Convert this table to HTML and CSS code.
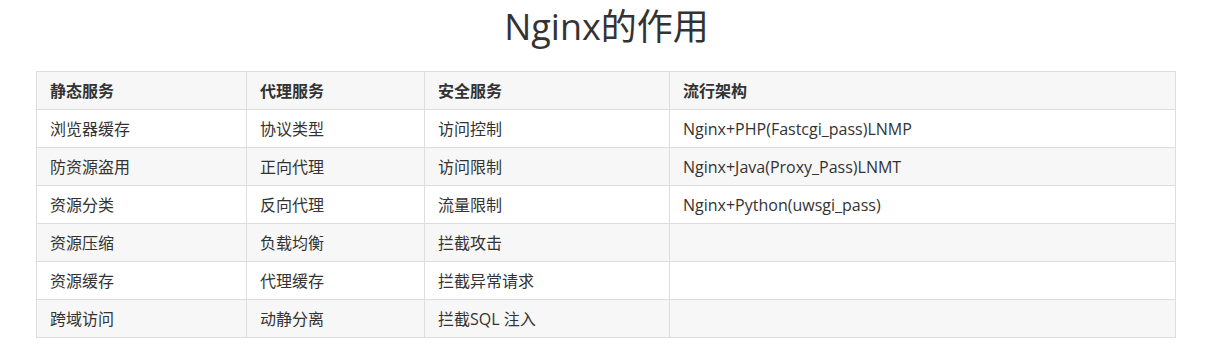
FILE: index.html
```html
<!DOCTYPE html>
<html lang="zh">
<head>
<meta charset="utf-8">
<title>Nginx的作用</title>
<link rel="stylesheet" href="styles.css">
</head>
<body>
<div class="page">
  <h1 class="title">Nginx的作用</h1>
  <table class="grid">
    <thead>
      <tr><th class="c1">静态服务</th><th class="c2">代理服务</th><th class="c3">安全服务</th><th class="c4">流行架构</th></tr>
    </thead>
    <tbody>
      <tr><td>浏览器缓存</td><td>协议类型</td><td>访问控制</td><td>Nginx+PHP(Fastcgi_pass)LNMP</td></tr>
      <tr><td>防资源盗用</td><td>正向代理</td><td>访问限制</td><td>Nginx+Java(Proxy_Pass)LNMT</td></tr>
      <tr><td>资源分类</td><td>反向代理</td><td>流量限制</td><td>Nginx+Python(uwsgi_pass)</td></tr>
      <tr><td>资源压缩</td><td>负载均衡</td><td>拦截攻击</td><td></td></tr>
      <tr><td>资源缓存</td><td>代理缓存</td><td>拦截异常请求</td><td></td></tr>
      <tr><td>跨域访问</td><td>动静分离</td><td>拦截SQL 注入</td><td></td></tr>
    </tbody>
  </table>
</div>
</body>
</html>
```
FILE: styles.css
```css
html, body {
  margin: 0;
  padding: 0;
  background: #fff;
}
body {
  font-family: "Open Sans", "Noto Sans CJK SC", sans-serif;
  color: #333;
}
.page {
  width: 1141px;
  margin: 0 0 0 36px;
  padding-top: 4px;
}
.title {
  margin: 0 0 21px;
  text-align: center;
  font-size: 36px;
  font-weight: 400;
  line-height: 46px;
  color: #333;
}
.grid {
  width: 1140px;
  border-collapse: collapse;
  font-size: 16px;
  table-layout: fixed;
}
.grid th, .grid td {
  border: 1px solid #ddd;
  height: 38px;
  padding: 0 13px;
  text-align: left;
  vertical-align: middle;
  line-height: 22px;
  box-sizing: border-box;
}
.grid th {
  font-weight: 700;
}
.c1 { width: 210px; }
.c2 { width: 178px; }
.c3 { width: 245px; }
.grid thead tr,
.grid tbody tr:nth-child(even) {
  background: #f7f7f7;
}
.grid tbody tr:nth-child(odd) {
  background: #fff;
}
```
